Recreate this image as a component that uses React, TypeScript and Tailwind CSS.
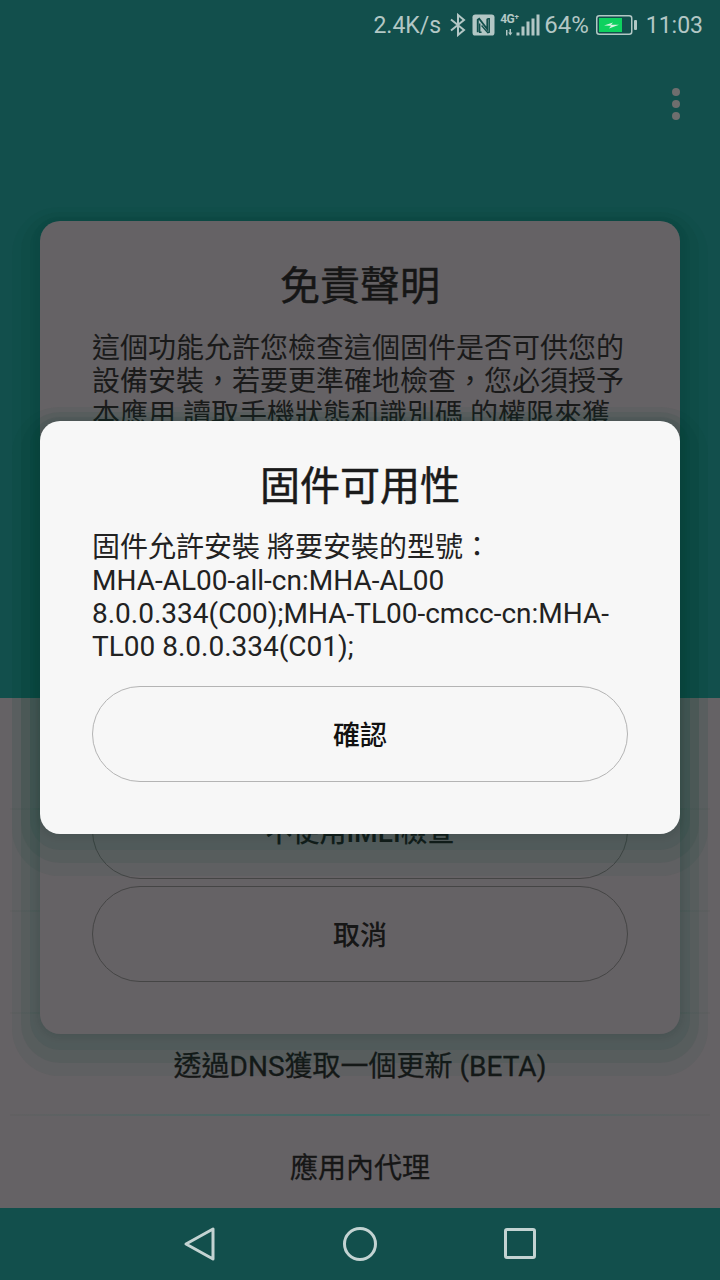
import React from 'react'

const halo =
  'shadow-[0_14px_0_28px_rgba(0,60,45,0.06),0_10px_0_19px_rgba(0,60,45,0.07),0_6px_0_10px_rgba(0,60,45,0.08),0_2px_6px_2px_rgba(0,30,30,0.08)]'

const StatusIcons = () => (
  <div className="flex items-center">
    {/* bluetooth */}
    <svg width="18" height="24" viewBox="0 0 18 24" fill="none" stroke="#b3c7c5" strokeWidth="2" className="ml-[8px]">
      <path d="M2 6.5 L15 17 L9 22 V2 L15 7 L2 17.5" />
    </svg>
    {/* nfc */}
    <svg width="23" height="22" viewBox="0 0 24 23" className="ml-[5px]">
      <rect x="0.5" y="0.5" width="23" height="22" rx="3" fill="#b3c7c5" />
      <path d="M6 19 V6 L7.5 5 L16 16 V5" fill="none" stroke="#124f4c" strokeWidth="2" />
      <path d="M8 10 V19 H10 M16 5 H18 V19 L16.5 19.5 L10 12" fill="none" stroke="#124f4c" strokeWidth="1.5" />
    </svg>
    {/* network */}
    <div className="relative ml-[5px] h-[22px] w-[41px]">
      <span className="absolute left-0 top-0 text-[12px] leading-[11px] font-bold tracking-[-0.5px] text-[#b3c7c5]">4G⁺</span>
      <svg width="41" height="22" viewBox="0 0 41 22" fill="#b3c7c5" className="absolute left-0 top-0">
        <path d="M6 16 h1.5 v5.5 h-1.5 z M9.5 15 h1.5 v3.5 h1.5 l-2.2 3 l-2.2 -3 h1.4 z" />
        <rect x="16.5" y="18.5" width="3" height="3" />
        <rect x="21.5" y="12.5" width="3" height="9" />
        <rect x="26.5" y="7.5" width="3" height="14" />
        <rect x="31.5" y="4.5" width="3" height="17" />
        <rect x="36.5" y="0.5" width="3" height="21" />
      </svg>
    </div>
    <span className="ml-[3px] text-[24px] leading-none text-[#b3c7c5]">64%</span>
    {/* battery */}
    <svg width="41" height="20" viewBox="0 0 41 20" className="ml-[7px]">
      <rect x="0.75" y="0.75" width="35" height="18.5" rx="2.5" fill="none" stroke="#b3c7c5" strokeWidth="1.5" />
      <rect x="3" y="3" width="23" height="14" fill="#0ed15f" />
      <path d="M8 10.5 L17 7.5 L15 9.8 H23 L13 13.5 L15 10.8 Z" fill="#d8f5e2" />
      <rect x="38" y="5" width="3" height="10" rx="1" fill="#b3c7c5" />
    </svg>
  </div>
)

const ListRow = ({ label }: { label?: string }) => (
  <div className="flex h-[102px] shrink-0 flex-col">
    <div className="flex flex-1 items-center justify-center pt-[6px] text-[28px] text-[#161616] [-webkit-text-stroke:0.3px_#161616]">{label}</div>
    <div className="mx-[10px] h-[2px] bg-linear-to-r from-[#626062] via-[#3a6a67] to-[#626062]" />
  </div>
)

const PillButton = ({ label, border }: { label: string; border: string }) => (
  <div className={`flex h-[96px] items-center justify-center rounded-full border pt-[5px] ${border} text-[27px] font-medium`}>
    {label}
  </div>
)

export default function App() {
  return (
    <div
      className="relative flex h-[1280px] w-[720px] flex-col overflow-hidden bg-[#656265]"
      style={{ fontFamily: 'Roboto, "Noto Sans CJK TC", sans-serif' }}
    >
      {/* teal header */}
      <div className="h-[698px] shrink-0 bg-[#124f4c]">
        <div className="flex h-[50px] items-center justify-end pr-[17px]">
          <span className="text-[23px] leading-none text-[#b3c7c5]">2.4K/s</span>
          <StatusIcons />
          <span className="ml-[9px] text-[23px] leading-none text-[#b3c7c5]">11:03</span>
        </div>
        <div className="mt-[38px] mr-[40px] flex flex-col items-end gap-[4px]">
          <span className="h-[8px] w-[8px] rounded-full bg-[#6e6e6e]" />
          <span className="h-[8px] w-[8px] rounded-full bg-[#6e6e6e]" />
          <span className="h-[8px] w-[8px] rounded-full bg-[#6e6e6e]" />
        </div>
      </div>

      {/* list under the dialogs */}
      <div className="flex min-h-0 flex-1 flex-col overflow-hidden">
        <div className="h-[10px] shrink-0" />
        <ListRow />
        <ListRow />
        <ListRow />
        <ListRow label="透過DNS獲取一個更新 (BETA)" />
        <ListRow label="應用內代理" />
      </div>

      {/* nav bar */}
      <div className="relative z-20 flex h-[72px] shrink-0 items-center justify-center gap-[100px] bg-[#124f4c]">
        <svg width="60" height="40" viewBox="0 0 60 40" fill="none" stroke="#c3d3d2" strokeWidth="3" strokeLinejoin="round">
          <path d="M43 5 V35 L16 20 Z" />
        </svg>
        <svg width="60" height="40" viewBox="0 0 60 40" fill="none" stroke="#c3d3d2" strokeWidth="3">
          <circle cx="30" cy="20" r="15.5" />
        </svg>
        <svg width="60" height="40" viewBox="0 0 60 40" fill="none" stroke="#c3d3d2" strokeWidth="3" strokeLinejoin="round">
          <rect x="15.5" y="5.5" width="29" height="28" rx="1.5" />
        </svg>
      </div>

      {/* disclaimer card */}
      <div className={`absolute left-[40px] top-[221px] flex h-[813px] w-[640px] flex-col rounded-[20px] bg-[#656265] px-[52px] pb-[52px] pt-[42px] ${halo}`}>
        <div className="text-center text-[40px] leading-[48px] text-[#161616] [-webkit-text-stroke:0.5px_#161616]">免責聲明</div>
        <div className="mt-[21px] text-[28px] leading-[33px] text-[#1a1a1a]">
          這個功能允許您檢查這個固件是否可供您的設備安裝，若要更準確地檢查，您必須授予本應用 讀取手機狀態和識別碼 的權限來獲
        </div>
        <div className="mt-auto flex flex-col gap-[7px] text-[#161616]">
          <PillButton label="不使用IMEI檢查" border="border-[#454545]" />
          <PillButton label="取消" border="border-[#454545]" />
        </div>
      </div>

      {/* availability dialog */}
      <div className={`absolute left-[40px] top-[421px] flex h-[413px] w-[640px] flex-col rounded-[20px] bg-[#f7f7f7] px-[52px] pb-[52px] pt-[42px] ${halo}`}>
        <div className="text-center text-[40px] leading-[48px] text-[#1a1a1a] [-webkit-text-stroke:0.5px_#1a1a1a]">固件可用性</div>
        <div className="mt-[20px] text-[28px] leading-[33px] text-[#222222]">
          固件允許安裝 將要安裝的型號：
          <br />
          MHA-AL00-all-cn:MHA-AL00 8.0.0.334(C00);MHA-TL00-cmcc-cn:MHA-TL00 8.0.0.334(C01);
        </div>
        <div className="mt-auto text-[#111111]">
          <PillButton label="確認" border="border-[#b4b4b4]" />
        </div>
      </div>
    </div>
  )
}
